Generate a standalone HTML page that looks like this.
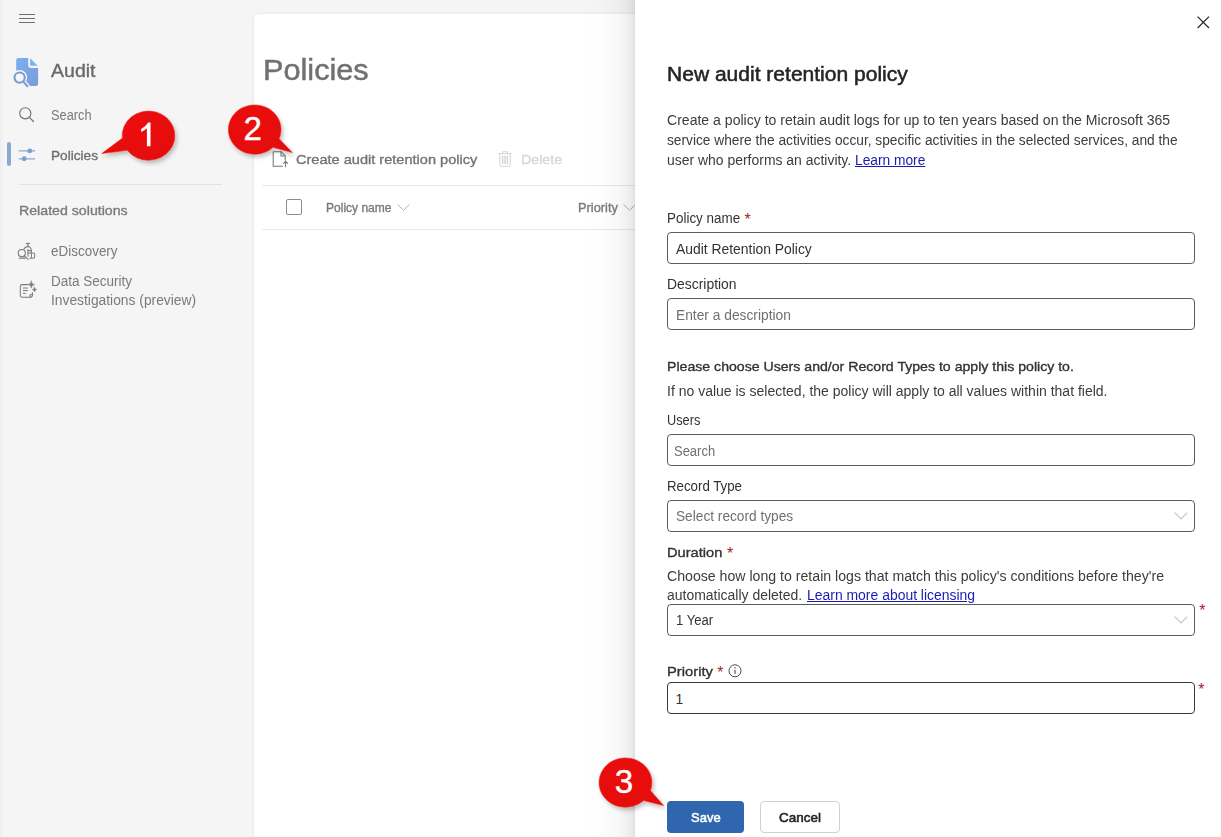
<!DOCTYPE html>
<html lang="en">
<head>
<meta charset="utf-8">
<title>Audit - Policies</title>
<style>
*{box-sizing:border-box;margin:0;padding:0}
html,body{width:1221px;height:837px;overflow:hidden;background:#f5f5f5;font-family:"Liberation Sans",sans-serif;}
#app{position:relative;width:1221px;height:837px;overflow:hidden;background:#f5f5f5}
.abs{position:absolute}
.t{position:absolute;white-space:nowrap;transform-origin:0 50%;display:block}
.lk{color:#1b1bb2;text-decoration:underline;text-decoration-thickness:1px;text-underline-offset:1px}
.card{position:absolute;left:254px;top:14px;width:980px;height:840px;background:#fff;border-radius:5px 0 0 0;box-shadow:0 0 3px rgba(0,0,0,.10)}
.hl{position:absolute;height:1px;background:#e9e9e9}
.panel{position:absolute;left:635px;top:0;width:586px;height:837px;background:#fff}
.pshadow{position:absolute;left:585px;top:0;width:50px;height:837px;background:linear-gradient(to right,rgba(0,0,0,0) 0%,rgba(0,0,0,.008) 35%,rgba(0,0,0,.03) 68%,rgba(0,0,0,.07) 90%,rgba(0,0,0,.12) 100%)}
.inp{position:absolute;left:667px;width:528px;height:32px;border:1px solid #5c5c5c;border-radius:4px;background:#fff}
.btn{position:absolute;top:801px;height:32px;border-radius:4px}
svg{position:absolute;overflow:visible}
</style>
</head>
<body>
<div id="app">
<!-- left edge hint -->
<div class="abs" style="left:0;top:0;width:4px;height:837px;background:linear-gradient(to right,#eeeeee,#f5f5f5)"></div>

<!-- ===== sidebar ===== -->
<svg style="left:19px;top:14px" width="16" height="10" viewBox="0 0 16 10"><path d="M0 .5H16M0 4.5H16M0 8.5H16" stroke="#6f6f6f" stroke-width="1" fill="none"/></svg>

<!-- Audit product icon -->
<svg style="left:10px;top:54px" width="32" height="36" viewBox="10 54 32 36">
 <defs><linearGradient id="ag" x1="0" y1="0" x2="0.7" y2="1"><stop offset="0" stop-color="#79b1ef"/><stop offset="1" stop-color="#7d9cdc"/></linearGradient></defs>
 <path d="M18.5 57.9 H28.2 V65.6 Q28.2 67.9 30.5 67.9 H38.1 V83.7 Q38.1 86 35.8 86 H18.5 Q16.2 86 16.2 83.7 V60.2 Q16.2 57.9 18.5 57.9Z" fill="url(#ag)"/>
 <path d="M30.1 58.2 L37.8 65.8 H30.8 Q30.1 65.8 30.1 65.1Z" fill="#79b3f4"/>
 <circle cx="19.6" cy="77.6" r="7.5" fill="#f5f5f5"/><rect x="15" y="82" width="9.5" height="5" fill="#f5f5f5"/>
 <path d="M23.6 81.9 L27.6 86.4" stroke="#f5f5f5" stroke-width="4.6" stroke-linecap="round"/>
 <circle cx="19.6" cy="77.6" r="5.15" fill="none" stroke="#7b9ecf" stroke-width="2.1"/>
 <path d="M23.6 81.9 L27.4 86.2" stroke="#7b9ecf" stroke-width="2.1" stroke-linecap="round"/>
</svg>

<!-- Search icon -->
<svg style="left:19px;top:107px" width="16" height="16" viewBox="0 0 16 16"><circle cx="6.3" cy="6.3" r="5.6" fill="none" stroke="#707070" stroke-width="1.1"/><path d="M10.4 10.4 L14.5 14.5" stroke="#707070" stroke-width="1.2" stroke-linecap="round"/></svg>

<!-- selected indicator -->
<div class="abs" style="left:7px;top:142px;width:4px;height:24px;border-radius:2px;background:#8aa7d6"></div>
<!-- Policies (sliders) icon -->
<svg style="left:16px;top:145px" width="22" height="20" viewBox="16 145 22 20">
 <path d="M19.2 150.9H34.6M19.2 158.8H34.6" stroke="#8ca8d5" stroke-width="1.35" stroke-linecap="round"/>
 <circle cx="29.8" cy="150.9" r="2.45" fill="#7c9ed0"/><circle cx="24.2" cy="158.8" r="2.45" fill="#7c9ed0"/>
</svg>

<div class="hl" style="left:19px;top:184px;width:203px;background:#e2e2e2"></div>

<!-- eDiscovery icon -->
<svg style="left:14px;top:238px" width="26" height="26" viewBox="14 238 26 26" fill="none" stroke="#7c7c7c" stroke-width="1.05" stroke-linecap="round" stroke-linejoin="round">
 <path d="M26 243.5H29.8" stroke-width="1.3" stroke-linecap="butt"/>
 <path d="M27.9 243.6V246.4"/>
 <path d="M23.9 249.3 Q25 246.6 27.9 246.6 Q30.9 246.8 31.4 250.6"/>
 <circle cx="21.8" cy="253.1" r="3.55"/>
 <path d="M24.5 255.8 L28.2 259.4"/>
 <path d="M19.3 258.1 H25.2" stroke-width="1.25"/>
 <path d="M28 249.6 V256.2"/>
 <path d="M31.4 250.6 V257.4"/>
 <path d="M28 253 H33.2 Q34.7 253 34.7 254.5 V256.8 Q34.7 258.3 33.2 258.3 H29.9"/>
 <path d="M28 250.8 Q30 250 31.4 251.4"/>
</svg>

<!-- Data Security Investigations icon -->
<svg style="left:16px;top:278px" width="24" height="24" viewBox="16 278 24 24" fill="none" stroke="#7c7c7c" stroke-width="1.05" stroke-linecap="round" stroke-linejoin="round">
 <path d="M27.6 284.6 H22.2 Q20.3 284.6 20.3 286.5 V295.4 Q20.3 297.3 22.2 297.3 H30.2 Q32.5 297.1 32.5 294.8 V292.8"/>
 <path d="M23.3 287.9H27.5M23.3 290.5H27.5M23.3 293.2H25.5"/>
 <path d="M30.4 297.2 Q29.4 295.4 30.6 294.4 Q31.8 293.8 32.5 294.8"/>
 <path d="M31.3 281 Q31.7 284.2 34.6 284.6 Q31.7 285 31.3 288.2 Q30.9 285 28 284.6 Q30.9 284.2 31.3 281Z" fill="#7c7c7c" stroke-width=".5"/>
 <path d="M34.5 287.2 Q34.8 289.3 36.8 289.6 Q34.8 289.9 34.5 292 Q34.2 289.9 32.2 289.6 Q34.2 289.3 34.5 287.2Z" fill="#7c7c7c" stroke-width=".4"/>
</svg>

<!-- ===== main card ===== -->
<div class="card"></div>
<!-- create icon -->
<svg style="left:272px;top:151px" width="17" height="17" viewBox="0 0 17 17" fill="none" stroke="#74747a" stroke-width="1.05" stroke-linejoin="round" stroke-linecap="round">
 <path d="M10.4 15.2 H1.2 V.8 H9.2 L13.2 4.8 V9.2"/>
 <path d="M9 .9 V5 H13.1"/>
 <path d="M13.6 15.6 V10.4 M11.6 12.4 L13.6 10.3 L15.6 12.4"/>
</svg>
<!-- delete icon -->
<svg style="left:498px;top:151px" width="14" height="16" viewBox="0 0 14 16" fill="none" stroke="#d6d6d6" stroke-width="1" stroke-linecap="round" stroke-linejoin="round">
 <path d="M.6 2.6 H13.4 M4.6 2.4 V.7 H9.4 V2.4"/>
 <path d="M1.8 2.8 V14 Q1.8 15.4 3.2 15.4 H10.8 Q12.2 15.4 12.2 14 V2.8"/>
 <path d="M4.6 5.2 V12.8 M7 5.2 V12.8 M9.4 5.2 V12.8" stroke-width="1.5"/>
</svg>
<div class="hl" style="left:262px;top:185px;width:400px"></div>
<div class="hl" style="left:262px;top:229px;width:400px"></div>
<!-- header checkbox -->
<div class="abs" style="left:286px;top:199px;width:16px;height:16px;border:1px solid #8c8c8c;border-radius:2px;background:#fff"></div>
<!-- chevrons -->
<svg style="left:397px;top:204px" width="13" height="7" viewBox="0 0 13 7"><path d="M.6 .6 L6.5 6.3 L12.4 .6" fill="none" stroke="#b4b4b4" stroke-width="1"/></svg>
<svg style="left:623px;top:204px" width="13" height="7" viewBox="0 0 13 7"><path d="M.6 .6 L6.5 6.3 L12.4 .6" fill="none" stroke="#b4b4b4" stroke-width="1"/></svg>

<!-- ===== panel ===== -->
<div class="pshadow"></div>
<div class="panel"></div>
<svg style="left:1196.6px;top:15.6px" width="13" height="13" viewBox="0 0 13 13"><path d="M.6 .6 L12 12 M12 .6 L.6 12" stroke="#202026" stroke-width="1.15" fill="none"/></svg>

<div class="inp" style="top:232px"></div>
<div class="inp" style="top:298px"></div>
<div class="inp" style="top:434px"></div>
<div class="inp" style="top:500px"></div>
<div class="inp" style="top:604px"></div>
<div class="inp" style="top:682px;border-color:#3a3a3a"></div>
<svg style="left:1174px;top:512px" width="14" height="8" viewBox="0 0 14 8"><path d="M.7 .7 L7 6.9 L13.3 .7" fill="none" stroke="#c2c2c2" stroke-width="1.1"/></svg>
<svg style="left:1174px;top:616px" width="14" height="8" viewBox="0 0 14 8"><path d="M.7 .7 L7 6.9 L13.3 .7" fill="none" stroke="#c2c2c2" stroke-width="1.1"/></svg>
<!-- info icon -->
<svg style="left:728px;top:664px" width="14" height="14" viewBox="0 0 14 14"><circle cx="7" cy="6.8" r="6" fill="none" stroke="#4a4a4a" stroke-width="1"/><path d="M7 5.8 V10" stroke="#4a4a4a" stroke-width="1.1"/><circle cx="7" cy="3.8" r=".75" fill="#4a4a4a"/></svg>

<div class="btn" style="left:667px;width:77px;background:#2f66ad"></div>
<div class="btn" style="left:760px;width:80px;background:#fff;border:1px solid #d1d1d1"></div>

<!-- ===== annotation bubbles ===== -->
<svg style="left:0;top:0" width="1221" height="837" viewBox="0 0 1221 837">
 <defs>
  <radialGradient id="rg" cx="0.4" cy="0.35" r="0.75"><stop offset="0" stop-color="#ec0c0b"/><stop offset="1" stop-color="#e30909"/></radialGradient>
  <filter id="ds" x="-30%" y="-30%" width="170%" height="170%"><feGaussianBlur in="SourceAlpha" stdDeviation="2.2"/><feOffset dx="1.5" dy="2.5"/><feComponentTransfer><feFuncA type="linear" slope=".24"/></feComponentTransfer><feMerge><feMergeNode/><feMergeNode in="SourceGraphic"/></feMerge></filter>
 </defs>
 <g filter="url(#ds)" fill="url(#rg)" stroke="#ee2a22" stroke-width=".6">
  <path d="M101.7 153.6 L122.3 138.2 A26.3 24.6 0 1 1 127.3 150.3 Z"/>
  <path d="M292.3 152.6 L272.9 147.3 A26.3 24.6 0 1 1 279.1 138.7 Z"/>
  <path d="M663.6 805.6 L643.5 800.5 A26.4 24.6 0 1 1 650.4 790.6 Z"/>
 </g>
 <path d="M150.5 122.6 V146.2 H146.9 V128.2 Q144.6 130.6 141.2 132 V128.9 Q146 126.6 148.2 122.6 Z" fill="#fff"/>
</svg>
<span class="t" style="left:51.3px;top:60.01px;font-size:17.6px;line-height:23px;color:#6a6a6a;font-weight:400;-webkit-text-stroke:0.35px currentColor;transform:scaleX(1.1095);">Audit</span>
<span class="t" style="left:51.3px;top:106.00px;font-size:13.8px;line-height:20px;color:#7a7a7a;font-weight:400;transform:scaleX(0.9287);">Search</span>
<span class="t" style="left:50.9px;top:146.00px;font-size:13.6px;line-height:20px;color:#6e6e6e;font-weight:400;-webkit-text-stroke:0.35px currentColor;transform:scaleX(1.0033);">Policies</span>
<span class="t" style="left:19.0px;top:201.00px;font-size:13.6px;line-height:20px;color:#7a7a7a;font-weight:400;-webkit-text-stroke:0.35px currentColor;transform:scaleX(1.0422);">Related solutions</span>
<span class="t" style="left:50.9px;top:242.00px;font-size:13.8px;line-height:20px;color:#7a7a7a;font-weight:400;transform:scaleX(0.9758);">eDiscovery</span>
<span class="t" style="left:50.9px;top:272.01px;font-size:13.8px;line-height:20px;color:#7a7a7a;font-weight:400;transform:scaleX(0.9791);">Data Security</span>
<span class="t" style="left:50.9px;top:291.01px;font-size:13.8px;line-height:20px;color:#7a7a7a;font-weight:400;transform:scaleX(1.0011);">Investigations (preview)</span>
<span class="t" style="left:263.2px;top:50.01px;font-size:30.0px;line-height:39px;color:#717171;font-weight:400;-webkit-text-stroke:0.5px currentColor;transform:scaleX(1.0225);">Policies</span>
<span class="t" style="left:295.7px;top:150.01px;font-size:13.6px;line-height:20px;color:#737373;font-weight:400;-webkit-text-stroke:0.35px currentColor;transform:scaleX(1.0711);">Create audit retention policy</span>
<span class="t" style="left:521.1px;top:150.01px;font-size:13.6px;line-height:20px;color:#d6d6d6;font-weight:400;-webkit-text-stroke:0.35px currentColor;transform:scaleX(1.0459);">Delete</span>
<span class="t" style="left:325.5px;top:198.01px;font-size:12.0px;line-height:20px;color:#7a7a7a;font-weight:400;-webkit-text-stroke:0.35px currentColor;transform:scaleX(1.0019);">Policy name</span>
<span class="t" style="left:577.7px;top:198.01px;font-size:12.0px;line-height:20px;color:#7a7a7a;font-weight:400;-webkit-text-stroke:0.35px currentColor;transform:scaleX(1.0685);">Priority</span>
<span class="t" style="left:667.2px;top:62.00px;font-size:19.6px;line-height:25px;color:#242424;font-weight:400;-webkit-text-stroke:0.5px currentColor;transform:scaleX(1.0732);">New audit retention policy</span>
<span class="t" style="left:667.2px;top:111.01px;font-size:13.8px;line-height:20px;color:#3c3c3c;font-weight:400;transform:scaleX(1.0188);">Create a policy to retain audit logs for up to ten years based on the Microsoft 365</span>
<span class="t" style="left:667.2px;top:131.00px;font-size:13.8px;line-height:20px;color:#3c3c3c;font-weight:400;transform:scaleX(0.9953);">service where the activities occur, specific activities in the selected services, and the</span>
<span class="t" style="left:667.2px;top:151.01px;font-size:13.8px;line-height:20px;color:#3c3c3c;font-weight:400;transform:scaleX(1.0107);">user who performs an activity.</span>
<span class="t" style="left:855.4px;top:151.01px;font-size:13.8px;line-height:20px;color:#3c3c3c;font-weight:400;transform:scaleX(0.9963);"><span class="lk">Learn more</span></span>
<span class="t" style="left:667.2px;top:209.01px;font-size:13.8px;line-height:20px;color:#323232;font-weight:400;transform:scaleX(0.9726);">Policy name</span>
<span class="t" style="left:676.0px;top:240.00px;font-size:13.8px;line-height:20px;color:#323232;font-weight:400;transform:scaleX(1.0060);">Audit Retention Policy</span>
<span class="t" style="left:667.2px;top:275.00px;font-size:13.8px;line-height:20px;color:#323232;font-weight:400;transform:scaleX(1.0085);">Description</span>
<span class="t" style="left:676.0px;top:306.01px;font-size:13.8px;line-height:20px;color:#707070;font-weight:400;transform:scaleX(0.9987);">Enter a description</span>
<span class="t" style="left:667.2px;top:357.01px;font-size:13.6px;line-height:20px;color:#323232;font-weight:400;-webkit-text-stroke:0.35px currentColor;transform:scaleX(1.0382);">Please choose Users and/or Record Types to apply this policy to.</span>
<span class="t" style="left:667.2px;top:382.01px;font-size:13.8px;line-height:20px;color:#3c3c3c;font-weight:400;transform:scaleX(1.0148);">If no value is selected, the policy will apply to all values within that field.</span>
<span class="t" style="left:667.2px;top:411.01px;font-size:13.8px;line-height:20px;color:#323232;font-weight:400;transform:scaleX(0.9242);">Users</span>
<span class="t" style="left:673.6px;top:442.01px;font-size:13.8px;line-height:20px;color:#707070;font-weight:400;transform:scaleX(0.9401);">Search</span>
<span class="t" style="left:667.2px;top:477.01px;font-size:13.8px;line-height:20px;color:#323232;font-weight:400;transform:scaleX(0.9617);">Record Type</span>
<span class="t" style="left:676.0px;top:507.00px;font-size:13.8px;line-height:20px;color:#707070;font-weight:400;transform:scaleX(0.9915);">Select record types</span>
<span class="t" style="left:667.2px;top:543.01px;font-size:13.6px;line-height:20px;color:#323232;font-weight:400;-webkit-text-stroke:0.35px currentColor;transform:scaleX(1.0780);">Duration</span>
<span class="t" style="left:667.2px;top:567.01px;font-size:13.8px;line-height:20px;color:#3c3c3c;font-weight:400;transform:scaleX(1.0240);">Choose how long to retain logs that match this policy's conditions before they're</span>
<span class="t" style="left:667.2px;top:586.01px;font-size:13.8px;line-height:20px;color:#3c3c3c;font-weight:400;transform:scaleX(1.0123);">automatically deleted.</span>
<span class="t" style="left:806.5px;top:586.01px;font-size:13.8px;line-height:20px;color:#3c3c3c;font-weight:400;transform:scaleX(1.0100);"><span class="lk">Learn more about licensing</span></span>
<span class="t" style="left:676.0px;top:611.00px;font-size:13.8px;line-height:20px;color:#323232;font-weight:400;transform:scaleX(0.9504);">1 Year</span>
<span class="t" style="left:667.0px;top:662.01px;font-size:13.6px;line-height:20px;color:#323232;font-weight:400;-webkit-text-stroke:0.35px currentColor;transform:scaleX(1.0852);">Priority</span>
<span class="t" style="left:675.4px;top:690.00px;font-size:13.8px;line-height:20px;color:#323232;font-weight:400;">1</span>
<span class="t" style="left:690.6px;top:808.01px;font-size:13.6px;line-height:20px;color:#ffffff;font-weight:400;-webkit-text-stroke:0.55px currentColor;transform:scaleX(0.9553);">Save</span>
<span class="t" style="left:779.1px;top:808.01px;font-size:13.6px;line-height:20px;color:#242424;font-weight:400;-webkit-text-stroke:0.55px currentColor;transform:scaleX(0.9899);">Cancel</span>
<span class="t" style="left:744.6px;top:209.01px;font-size:16.0px;line-height:21px;color:#a4262c;font-weight:400;">*</span>
<span class="t" style="left:726.9px;top:543.01px;font-size:16.0px;line-height:21px;color:#a4262c;font-weight:400;">*</span>
<span class="t" style="left:1199.2px;top:600.00px;font-size:16.0px;line-height:21px;color:#a4262c;font-weight:400;">*</span>
<span class="t" style="left:717.2px;top:662.01px;font-size:16.0px;line-height:21px;color:#a4262c;font-weight:400;">*</span>
<span class="t" style="left:1198.2px;top:679.00px;font-size:16.0px;line-height:21px;color:#a4262c;font-weight:400;">*</span>
<span class="t" style="left:243.4px;top:107.00px;font-size:33.2px;line-height:43px;color:#ffffff;font-weight:400;-webkit-text-stroke:0.35px currentColor;">2</span>
<span class="t" style="left:614.7px;top:760.00px;font-size:33.2px;line-height:43px;color:#ffffff;font-weight:400;-webkit-text-stroke:0.35px currentColor;">3</span>
</div>
</body>
</html>
